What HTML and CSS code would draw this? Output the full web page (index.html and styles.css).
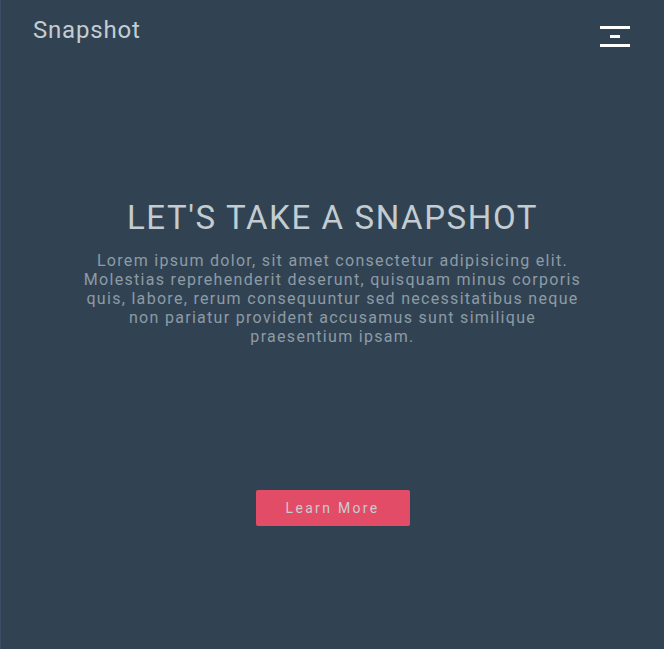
FILE: index.html
```html
<!DOCTYPE html>
<html>
<head>
<meta charset="utf-8">
<link rel="stylesheet" href="styles.css">
</head>
<body>
<div class="page">
  <header class="topbar">
    <a class="logo">Snapshot</a>
    <button class="menu" aria-label="menu">
      <span class="bar bar-long"></span>
      <span class="bar bar-short"></span>
      <span class="bar bar-long"></span>
    </button>
  </header>
  <main class="hero">
    <h1 class="title">LET'S TAKE A SNAPSHOT</h1>
    <p class="lead">Lorem ipsum dolor, sit amet consectetur adipisicing elit. Molestias reprehenderit deserunt, quisquam minus corporis quis, labore, rerum consequuntur sed necessitatibus neque non pariatur provident accusamus sunt similique praesentium ipsam.</p>
    <a class="cta">Learn More</a>
  </main>
</div>
</body>
</html>
```
FILE: styles.css
```css
html, body {
  margin: 0;
  padding: 0;
  height: 100%;
}
body {
  background: #314353;
  font-family: Roboto, "Open Sans", sans-serif;
}
.page {
  height: 649px;
  box-sizing: border-box;
  border-left: 1px solid #3b4e66;
  display: flex;
  flex-direction: column;
}
.topbar {
  display: flex;
  justify-content: space-between;
  align-items: flex-start;
  padding: 15px 34px 0 32px;
}
.logo {
  color: #c3cdd1;
  font-size: 24px;
  line-height: 30px;
  letter-spacing: 0.8px;
}
.menu {
  background: none;
  border: 0;
  padding: 0;
  margin-top: 11px;
  width: 30px;
  display: flex;
  flex-direction: column;
  align-items: center;
  gap: 6px;
}
.bar {
  display: block;
  height: 3px;
  background: #ffffff;
}
.bar-long { width: 30px; }
.bar-short { width: 10px; }
.hero {
  display: flex;
  flex-direction: column;
  align-items: center;
  text-align: center;
  padding-top: 151px;
}
.title {
  margin: 0;
  color: #c3cdd1;
  font-weight: 400;
  font-size: 33px;
  line-height: 40px;
  letter-spacing: 1.6px;
}
.lead {
  margin: 13px 0 0;
  width: 504px;
  color: #8d9ba5;
  font-size: 16px;
  line-height: 19px;
  letter-spacing: 1.3px;
}
.cta {
  margin-top: 144px;
  width: 154px;
  height: 36px;
  display: flex;
  align-items: center;
  justify-content: center;
  background: #e34c67;
  border-radius: 2px;
  color: #c9cdd2;
  font-size: 14px;
  letter-spacing: 2.3px;
}
```
